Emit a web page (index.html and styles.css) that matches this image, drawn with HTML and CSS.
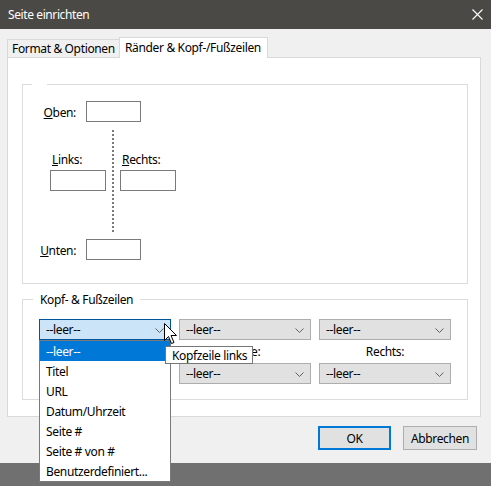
FILE: index.html
```html
<!DOCTYPE html>
<html lang="de">
<head>
<meta charset="utf-8">
<title>Seite einrichten</title>
<link rel="stylesheet" href="styles.css">
</head>
<body>
<div class="titlebar">
  <span class="title">Seite einrichten</span>
  <svg class="close" width="11" height="11" viewBox="0 0 11 11"><path d="M0.5 0.5 L10.5 10.5 M10.5 0.5 L0.5 10.5" stroke="#ffffff" stroke-width="1.1" fill="none"/></svg>
</div>
<div class="dialog">
  <div class="tabs">
    <div class="tab">Format &amp; Optionen</div>
    <div class="tab active">Ränder &amp; Kopf-/Fußzeilen</div>
  </div>
  <div class="panel">
    <fieldset class="group margins">
      <legend class="empty"></legend>
      <div class="mrow first"><label><u>O</u>ben:</label><span class="field"></span></div>
      <div class="mid">
        <label class="l-links"><u>L</u>inks:</label>
        <label class="l-rechts"><u>R</u>echts:</label>
        <span class="field f-links"></span>
        <span class="dots"></span>
        <span class="field f-rechts"></span>
      </div>
      <div class="mrow"><label><u>U</u>nten:</label><span class="field"></span></div>
    </fieldset>
    <fieldset class="group hf">
      <legend>Kopf- &amp; Fußzeilen</legend>
      <div class="hfgrid">
        <div class="combo open"><span>--leer--</span><svg class="chev" width="9" height="5" viewBox="0 0 9 5"><path d="M0.5 0.5 L4.5 4.5 L8.5 0.5" stroke="#606060" fill="none"/></svg>
          <div class="list">
            <div class="item sel">--leer--</div>
            <div class="item">Titel</div>
            <div class="item">URL</div>
            <div class="item">Datum/Uhrzeit</div>
            <div class="item">Seite #</div>
            <div class="item">Seite # von #</div>
            <div class="item">Benutzerdefiniert...</div>
          </div>
        </div>
        <div class="combo"><span>--leer--</span><svg class="chev" width="9" height="5" viewBox="0 0 9 5"><path d="M0.5 0.5 L4.5 4.5 L8.5 0.5" stroke="#606060" fill="none"/></svg></div>
        <div class="combo"><span>--leer--</span><svg class="chev" width="9" height="5" viewBox="0 0 9 5"><path d="M0.5 0.5 L4.5 4.5 L8.5 0.5" stroke="#606060" fill="none"/></svg></div>
        <div class="cap">Links:</div>
        <div class="cap">Mitte:</div>
        <div class="cap">Rechts:</div>
        <div class="combo"><span>--leer--</span><svg class="chev" width="9" height="5" viewBox="0 0 9 5"><path d="M0.5 0.5 L4.5 4.5 L8.5 0.5" stroke="#606060" fill="none"/></svg></div>
        <div class="combo"><span>--leer--</span><svg class="chev" width="9" height="5" viewBox="0 0 9 5"><path d="M0.5 0.5 L4.5 4.5 L8.5 0.5" stroke="#606060" fill="none"/></svg></div>
        <div class="combo"><span>--leer--</span><svg class="chev" width="9" height="5" viewBox="0 0 9 5"><path d="M0.5 0.5 L4.5 4.5 L8.5 0.5" stroke="#606060" fill="none"/></svg></div>
      </div>
    </fieldset>
  </div>
  <div class="buttons">
    <button class="btn default">OK</button>
    <button class="btn">Abbrechen</button>
  </div>
</div>
<div class="tooltip">Kopfzeile links</div>
<svg class="cursor" width="13" height="22" viewBox="0 0 13 22"><path d="M0.5 0.5 L0.5 17.5 L4.5 13.5 L7.5 20.5 L10 19.5 L7 12.5 L12.5 12.5 Z" fill="#ffffff" stroke="#000000" stroke-width="1" stroke-linejoin="miter"/></svg>
</body>
</html>
```
FILE: styles.css
```css
* { box-sizing: border-box; }
html, body { margin: 0; padding: 0; }
body {
  width: 491px;
  height: 486px;
  overflow: hidden;
  position: relative;
  font-family: "Noto Sans", "Segoe UI", sans-serif;
  font-size: 12px;
  letter-spacing: -0.35px;
  color: #000;
  background: linear-gradient(#4f4f4f, #6c6c6c 40%, #707070);
}
.titlebar {
  height: 29px;
  background: #4b4946;
  color: #fff;
  display: flex;
  align-items: center;
  justify-content: space-between;
  padding: 0 8px 0 8px;
}
.title { line-height: 16px; letter-spacing: -0.4px; }
.close { display: block; }
.dialog {
  height: 434px;
  background: #f0f0f0;
  padding-top: 8px;
}
.tabs {
  display: flex;
  align-items: flex-end;
  margin-left: 7px;
  height: 21px;
  margin-bottom: -1px;
  position: relative;
  z-index: 1;
}
.tab {
  height: 19px;
  width: 112px;
  border: 1px solid #d9d9d9;
  border-bottom: none;
  border-right: none;
  padding-left: 4px;
  line-height: 18px;
  white-space: nowrap;
  overflow: hidden;
}
.tab.active {
  height: 21px;
  width: 149px;
  background: #fff;
  border-right: 1px solid #d9d9d9;
  padding-left: 5px;
  line-height: 20px;
}
.panel {
  margin-left: 7px;
  width: 474px;
  height: 360px;
  border: 1px solid #d9d9d9;
  background: #fff;
  padding: 26px 0 0 14px;
}
fieldset.group {
  margin: 0;
  padding: 0;
  width: 446px;
  min-width: 0;
  border: 1px solid #dcdcdc;
}
.margins { height: 200px; }
.margins legend {
  width: 15px;
  height: 0;
  padding: 0;
  margin-left: 9px;
}
.mrow {
  display: flex;
  align-items: center;
  height: 21px;
}
.mrow.first { margin-top: 16px; }
.mrow label {
  width: 53px;
  text-align: right;
  margin-right: 10px;
  padding-top: 2px;
}
.field {
  display: block;
  width: 55px;
  height: 21px;
  border: 1px solid #7a7a7a;
  background: #fff;
}
.mid {
  display: grid;
  grid-template-columns: 27px 56px 14px 56px;
  grid-template-rows: 29px 16px 3px 21px 48px;
}
.mid label { line-height: 18px; padding-left: 2px; white-space: nowrap; }
.l-links { grid-column: 2; grid-row: 2; }
.l-rechts { grid-column: 4; grid-row: 2; }
.f-links { grid-column: 2; grid-row: 4; width: 56px; }
.f-rechts { grid-column: 4; grid-row: 4; width: 56px; }
.dots {
  grid-column: 3;
  grid-row: 1 / 6;
  justify-self: center;
  width: 2px;
  margin: 8px 0 6px;
  background: repeating-linear-gradient(#7a7a7a 0 2px, transparent 2px 4px);
}
.hf {
  margin-top: 7px !important;
  padding: 11px 0 15px 0 !important;
}
.hf legend {
  margin-left: 10px;
  padding: 0 7px;
  line-height: 17px;
}
.hfgrid {
  display: grid;
  grid-template-columns: repeat(3, 132px);
  grid-template-rows: 21px 23px 21px;
  column-gap: 8px;
  padding-left: 16px;
}
.combo {
  position: relative;
  display: flex;
  align-items: center;
  justify-content: space-between;
  border: 1px solid #adadad;
  background: #e1e1e1;
  padding: 0 6px 0 6px;
  line-height: 20px;
}
.combo > span { padding-top: 1px; }
.chev { display: block; margin-top: 1px; }
.combo.open {
  background: #cce4f7;
  border-color: #005499;
}
.list {
  position: absolute;
  left: -1px;
  top: 20px;
  width: 132px;
  border: 1px solid #7a7a7a;
  background: #fff;
  z-index: 3;
}
.item {
  height: 20px;
  line-height: 21px;
  padding-left: 6px;
  white-space: nowrap;
}
.item.sel { background: #0078d7; color: #fff; }
.cap {
  text-align: center;
  line-height: 24px;
}
.buttons {
  display: flex;
  justify-content: flex-end;
  gap: 12px;
  padding-right: 14px;
  margin-top: 9px;
}
.btn {
  height: 24px;
  width: 74px;
  font: inherit;
  letter-spacing: inherit;
  color: #000;
  background: #e1e1e1;
  border: 1px solid #adadad;
  padding: 0;
  margin: 0;
}
.btn.default {
  width: 73px;
  border: 2px solid #0078d7;
}
.tooltip {
  position: absolute;
  left: 165px;
  top: 346px;
  width: 88px;
  height: 18px;
  border: 1px solid #767676;
  background: #fff;
  color: #000;
  padding-left: 6px;
  line-height: 17px;
  white-space: nowrap;
  z-index: 5;
}
.cursor {
  position: absolute;
  left: 164px;
  top: 323px;
  z-index: 6;
}
```
